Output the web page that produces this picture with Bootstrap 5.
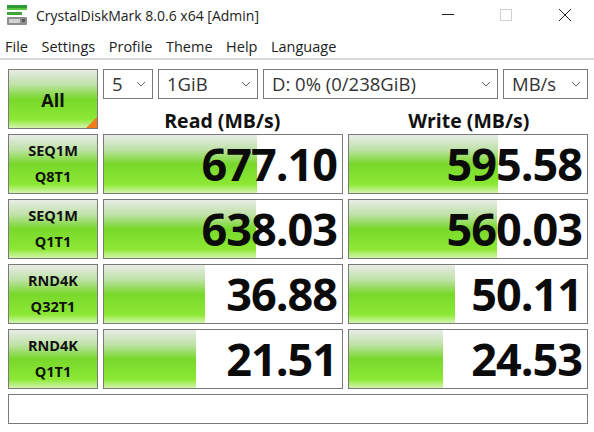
<!DOCTYPE html>
<html lang="en">
<head>
<meta charset="utf-8">
<title>CrystalDiskMark</title>
<link href="https://cdn.jsdelivr.net/npm/bootstrap@5.3.0/dist/css/bootstrap.min.css" rel="stylesheet">
<style>
html,body{margin:0;height:100%;background:#fff;overflow:hidden}
body{font-family:"Open Sans","Noto Sans",sans-serif;color:#111}
.app-title{height:30px;padding-left:7px;font-size:14px;color:#222}
.app-title svg.logo{margin-right:9px}
.win-btn{width:58.5px;height:30px}
.app-menu{height:30px;border-bottom:2px solid #d8d8d8;padding:3px 5px 0 5px;gap:13.5px;font-size:14.5px;color:#222}
.app-menu span{line-height:28px}
.bench{display:grid;grid-template-columns:90px 240px 240px;column-gap:5px;row-gap:5px;padding:9px 6px 0 8px}
.cell-box{border:1px solid #7a7a7a;background:#fff}
.green-fill{background:linear-gradient(180deg,#e8ece6 0%,#bfe2a8 25%,#78d82a 50%,#7ddc2e 58%,#8ce833 85%,#d4f5ae 100%)}
.btn-all{height:60px;font-weight:700;font-size:18px;position:relative;padding-top:2px}
.btn-all::after{content:"";position:absolute;right:0;bottom:0;border-style:solid;border-width:0 0 11px 11px;border-color:transparent transparent #f07c1c transparent}
.top-area{grid-column:span 2}
.sel-row{gap:5px;height:30px}
.sel-box{height:30px;font-size:18.5px;color:#333;padding:0 0 0 8px}
.sel-box svg{margin-right:6px;flex:none}
.s1{width:50px}.s2{width:100px}.s3{width:235px}.s4{width:85px}
.heads{height:35px;margin-bottom:-5px}
.heads div{width:240px;text-align:center;font-weight:700;font-size:19.5px;color:#111;line-height:44px}
.test-btn{height:60px;font-weight:700;font-size:14.5px;line-height:25.5px;padding-top:3px}
.result{height:60px;position:relative;overflow:hidden}
.result .bar{position:absolute;left:0;top:0;bottom:0}
.result .val{position:relative;font-weight:700;font-size:45px;line-height:58px;color:#0b0b0b;padding-right:5px;letter-spacing:-1px}
.status{grid-column:1 / span 3;height:30px}
</style>
</head>
<body>
<div class="app-title d-flex align-items-center">
  <svg class="logo" width="20" height="22" viewBox="0 0 20 22" aria-hidden="true">
    <rect x="0" y="1" width="20" height="3" fill="#2f9a34"/>
    <rect x="0" y="4" width="20" height="2" fill="#58c43f"/>
    <rect x="0" y="8" width="15" height="3" fill="#3fa53c"/>
    <rect x="0" y="13" width="20" height="8" rx="1" fill="#8e8e8e"/>
    <rect x="2" y="15" width="11" height="4" fill="#d2d2d2"/>
    <rect x="15" y="15" width="3" height="3" fill="#5a5a5a"/>
  </svg>
  <span>CrystalDiskMark 8.0.6 x64 [Admin]</span>
  <div class="ms-auto d-flex">
    <div class="win-btn d-flex align-items-center justify-content-center"><svg width="14" height="14" viewBox="0 0 14 14"><path d="M1 6.5h12" stroke="#222" fill="none"/></svg></div>
    <div class="win-btn d-flex align-items-center justify-content-center"><svg width="14" height="14" viewBox="0 0 14 14"><rect x="1.5" y="1.5" width="11" height="11" stroke="#cfcfcf" fill="none"/></svg></div>
    <div class="win-btn d-flex align-items-center justify-content-center"><svg width="14" height="14" viewBox="0 0 14 14"><path d="M1 1l12 12M13 1L1 13" stroke="#222" fill="none"/></svg></div>
  </div>
</div>
<nav class="app-menu d-flex">
  <span>File</span><span>Settings</span><span>Profile</span><span>Theme</span><span>Help</span><span>Language</span>
</nav>
<main class="bench">
  <div class="cell-box green-fill btn-all d-flex align-items-center justify-content-center">All</div>
  <div class="top-area">
    <div class="sel-row d-flex">
      <div class="cell-box sel-box s1 d-flex align-items-center justify-content-between">5<svg width="10" height="6" viewBox="0 0 10 6"><path d="M1 1l4 4 4-4" stroke="#666" fill="none"/></svg></div>
      <div class="cell-box sel-box s2 d-flex align-items-center justify-content-between">1GiB<svg width="10" height="6" viewBox="0 0 10 6"><path d="M1 1l4 4 4-4" stroke="#666" fill="none"/></svg></div>
      <div class="cell-box sel-box s3 d-flex align-items-center justify-content-between">D: 0% (0/238GiB)<svg width="10" height="6" viewBox="0 0 10 6"><path d="M1 1l4 4 4-4" stroke="#666" fill="none"/></svg></div>
      <div class="cell-box sel-box s4 d-flex align-items-center justify-content-between">MB/s<svg width="10" height="6" viewBox="0 0 10 6"><path d="M1 1l4 4 4-4" stroke="#666" fill="none"/></svg></div>
    </div>
    <div class="heads d-flex gap-1"><div>Read (MB/s)</div><div class="ms-1">Write (MB/s)</div></div>
  </div>

  <div class="cell-box green-fill test-btn text-center">SEQ1M<br>Q8T1</div>
  <div class="cell-box result text-end"><div class="bar green-fill" style="width:153px"></div><div class="val">677.10</div></div>
  <div class="cell-box result text-end"><div class="bar green-fill" style="width:149px"></div><div class="val">595.58</div></div>

  <div class="cell-box green-fill test-btn text-center">SEQ1M<br>Q1T1</div>
  <div class="cell-box result text-end"><div class="bar green-fill" style="width:152px"></div><div class="val">638.03</div></div>
  <div class="cell-box result text-end"><div class="bar green-fill" style="width:148px"></div><div class="val">560.03</div></div>

  <div class="cell-box green-fill test-btn text-center">RND4K<br>Q32T1</div>
  <div class="cell-box result text-end"><div class="bar green-fill" style="width:101px"></div><div class="val">36.88</div></div>
  <div class="cell-box result text-end"><div class="bar green-fill" style="width:106px"></div><div class="val">50.11</div></div>

  <div class="cell-box green-fill test-btn text-center">RND4K<br>Q1T1</div>
  <div class="cell-box result text-end"><div class="bar green-fill" style="width:92px"></div><div class="val">21.51</div></div>
  <div class="cell-box result text-end"><div class="bar green-fill" style="width:94px"></div><div class="val">24.53</div></div>

  <div class="cell-box status"></div>
</main>
<script src="https://cdn.jsdelivr.net/npm/bootstrap@5.3.0/dist/js/bootstrap.bundle.min.js"></script>
</body>
</html>
